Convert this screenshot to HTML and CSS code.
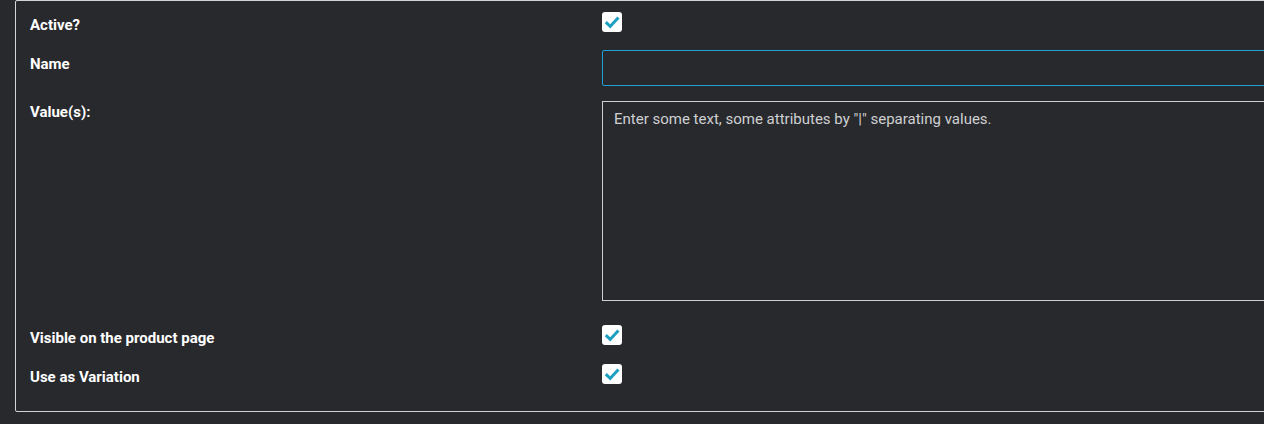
FILE: index.html
```html
<!DOCTYPE html>
<html>
<head>
<meta charset="utf-8">
<link rel="stylesheet" href="styles.css">
</head>
<body>
<div class="panel">
  <div class="row row-active">
    <div class="label">Active?</div>
    <div class="control"><span class="check"><svg viewBox="0 0 20 20" width="20" height="20"><path d="M3.8 10.2 L8.2 14.4 L16.4 5.4" fill="none" stroke="#1d9fbf" stroke-width="3"/></svg></span></div>
  </div>
  <div class="row row-name">
    <div class="label">Name</div>
    <div class="control"><div class="input"></div></div>
  </div>
  <div class="row row-values">
    <div class="label">Value(s):</div>
    <div class="control"><div class="textarea">Enter some text, some attributes by "|" separating values.</div></div>
  </div>
  <div class="row row-visible">
    <div class="label">Visible on the product page</div>
    <div class="control"><span class="check"><svg viewBox="0 0 20 20" width="20" height="20"><path d="M3.8 10.2 L8.2 14.4 L16.4 5.4" fill="none" stroke="#1d9fbf" stroke-width="3"/></svg></span></div>
  </div>
  <div class="row row-variation">
    <div class="label">Use as Variation</div>
    <div class="control"><span class="check"><svg viewBox="0 0 20 20" width="20" height="20"><path d="M3.8 10.2 L8.2 14.4 L16.4 5.4" fill="none" stroke="#1d9fbf" stroke-width="3"/></svg></span></div>
  </div>
</div>
</body>
</html>
```
FILE: styles.css
```css
html, body {
  margin: 0;
  padding: 0;
  background: #28292d;
  overflow: hidden;
  height: 424px;
}
body {
  font-family: Roboto, "Liberation Sans", Arial, sans-serif;
  font-size: 15px;
  line-height: 20px;
  color: #ffffff;
}
.panel {
  margin-left: 15px;
  width: 1300px;
  border: 1px solid #d4d4d4;
  border-radius: 2px;
  padding: 11px 0 27px 14px;
  box-sizing: border-box;
  display: flex;
  flex-direction: column;
}
.row {
  display: grid;
  grid-template-columns: 572px 1fr;
  align-items: start;
}
.row-name { margin-top: 18px; }
.row-values { margin-top: 15px; }
.row-visible { margin-top: 24px; }
.row-variation { margin-top: 19px; }
.label {
  font-weight: 700;
  padding-top: 3px;
  margin-bottom: -24px;
}
.row-name .label { padding-top: 4px; }
.row-values .label { padding-top: 1px; }
.check {
  display: block;
  width: 20px;
  height: 20px;
  background: #ffffff;
  border-radius: 3px;
}
.check svg { display: block; }
.input {
  height: 36px;
  box-sizing: border-box;
  border: 1px solid #1e9fd6;
  border-radius: 2px;
}
.textarea {
  height: 200px;
  box-sizing: border-box;
  border: 1px solid #cfcfcf;
  padding: 7px 11px;
  color: #cfd0d2;
  font-weight: 400;
}
```
